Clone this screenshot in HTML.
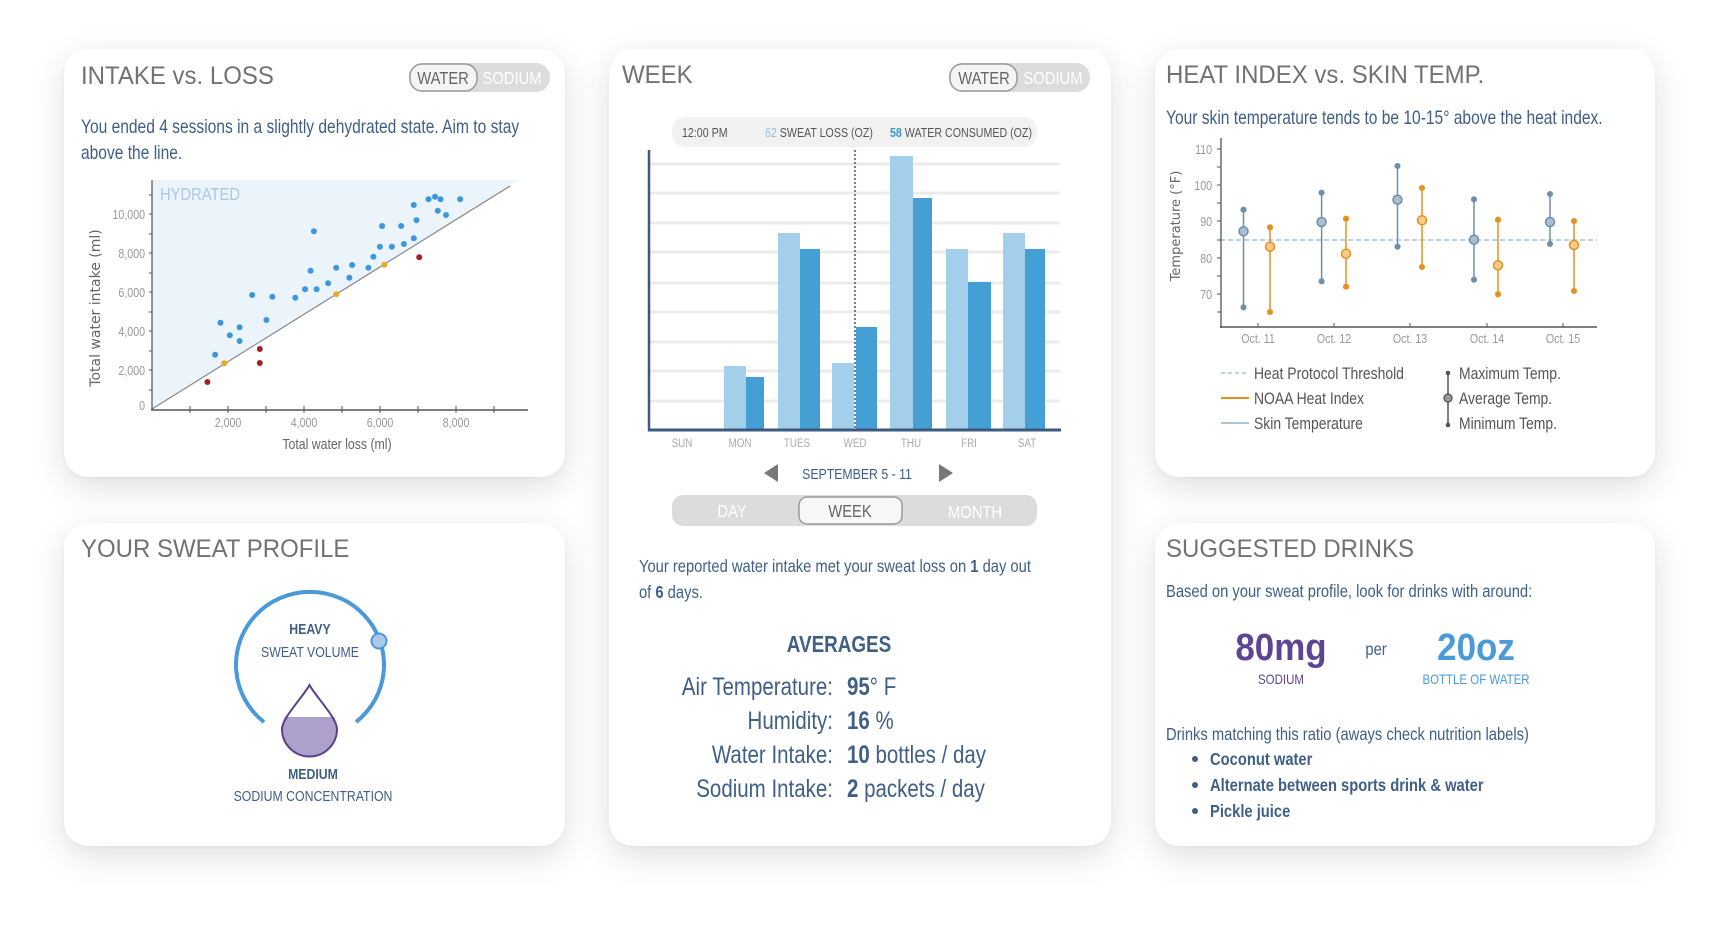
<!DOCTYPE html>
<html><head><meta charset="utf-8">
<style>
html,body{margin:0;padding:0;background:#fff;width:1712px;height:926px;overflow:hidden;}
.card{position:absolute;background:#fff;border-radius:24px;box-shadow:0 10px 34px rgba(0,0,0,0.13),0 1px 4px rgba(0,0,0,0.04);}
svg{position:absolute;left:0;top:0;}
text{font-family:"Liberation Sans Narrow","Liberation Sans",sans-serif;}
text:not(.r){transform-box:fill-box;transform-origin:0% 50%;transform:scaleX(0.82);}
text[text-anchor="middle"]:not(.r){transform-origin:50% 50%;}
text[text-anchor="end"]:not(.r){transform-origin:100% 50%;}
text.t{transform:scaleX(0.96);}
text.big{transform:scaleX(0.92);}
</style></head><body>
<div class="card" style="left:64px;top:49px;width:501px;height:428px"></div>
<div class="card" style="left:609px;top:49px;width:502px;height:797px"></div>
<div class="card" style="left:1155px;top:49px;width:500px;height:428px"></div>
<div class="card" style="left:64px;top:523px;width:501px;height:323px"></div>
<div class="card" style="left:1155px;top:523px;width:500px;height:323px"></div>

<svg width="1712" height="926" viewBox="0 0 1712 926">
<!-- ===== Card 1 ===== -->
<text class="t" x="81" y="84" font-size="25" fill="#727272">INTAKE vs. LOSS</text>
<rect x="409" y="63" width="141" height="29" rx="14" fill="#dcdcdc"/>
<rect x="410" y="64" width="67" height="27" rx="12" fill="#f4f4f4" stroke="#9a9a9a" stroke-width="1.5"/>
<text x="443" y="84" font-size="18" fill="#666" text-anchor="middle">WATER</text>
<text x="512" y="84" font-size="18" fill="#fff" text-anchor="middle">SODIUM</text>
<text font-size="19" fill="#3f5f86"><tspan x="81" y="133">You ended 4 sessions in a slightly dehydrated state. Aim to stay</tspan><tspan x="81" y="159">above the line.</tspan></text>

<polygon points="152,180 518,180 152,409" fill="#ecf4fb"/>
<text x="160" y="200" font-size="18" fill="#a9c6e4">HYDRATED</text>
<line x1="152" y1="409" x2="510" y2="186" stroke="#888" stroke-width="1.2"/>
<line x1="152" y1="180" x2="152" y2="410" stroke="#555" stroke-width="1.2"/>
<line x1="151" y1="410" x2="528" y2="410" stroke="#555" stroke-width="1.5"/>
<g stroke="#555" stroke-width="1">
<line x1="190" y1="406" x2="190" y2="413"/><line x1="228" y1="406" x2="228" y2="413"/><line x1="266" y1="406" x2="266" y2="413"/><line x1="304" y1="406" x2="304" y2="413"/><line x1="342" y1="406" x2="342" y2="413"/><line x1="380" y1="406" x2="380" y2="413"/><line x1="418" y1="406" x2="418" y2="413"/><line x1="456" y1="406" x2="456" y2="413"/><line x1="494" y1="406" x2="494" y2="413"/>
<line x1="149" y1="390" x2="152" y2="390"/><line x1="149" y1="370" x2="152" y2="370"/><line x1="149" y1="351" x2="152" y2="351"/><line x1="149" y1="331" x2="152" y2="331"/><line x1="149" y1="312" x2="152" y2="312"/><line x1="149" y1="292" x2="152" y2="292"/><line x1="149" y1="273" x2="152" y2="273"/><line x1="149" y1="253" x2="152" y2="253"/><line x1="149" y1="234" x2="152" y2="234"/><line x1="149" y1="214" x2="152" y2="214"/><line x1="149" y1="195" x2="152" y2="195"/>
</g>
<g font-size="13" fill="#999" text-anchor="end">
<text x="145" y="410" text-anchor="end">0</text><text x="145" y="375" text-anchor="end">2,000</text><text x="145" y="336" text-anchor="end">4,000</text><text x="145" y="297" text-anchor="end">6,000</text><text x="145" y="258" text-anchor="end">8,000</text><text x="145" y="219" text-anchor="end">10,000</text>
</g>
<g font-size="13" fill="#999">
<text x="228" y="427" text-anchor="middle">2,000</text><text x="304" y="427" text-anchor="middle">4,000</text><text x="380" y="427" text-anchor="middle">6,000</text><text x="456" y="427" text-anchor="middle">8,000</text>
</g>
<text x="337" y="449" font-size="15" fill="#666" text-anchor="middle">Total water loss (ml)</text>
<text class="r" transform="translate(100,308) rotate(-90)" font-size="14" fill="#666" text-anchor="middle" style="font-family:'DejaVu Sans',sans-serif">Total water intake (ml)</text>
<g fill="#3d97dc">
<circle cx="220.5" cy="322.7" r="3"/><circle cx="215.1" cy="354.7" r="3"/><circle cx="229.8" cy="335.3" r="3"/><circle cx="239.6" cy="327.3" r="3"/><circle cx="239.6" cy="341" r="3"/><circle cx="252.2" cy="295" r="3"/><circle cx="266.4" cy="320" r="3"/><circle cx="272.4" cy="296.7" r="3"/><circle cx="295.3" cy="297.7" r="3"/><circle cx="305.1" cy="289.3" r="3"/><circle cx="310.6" cy="270.7" r="3"/><circle cx="313.9" cy="231.3" r="3"/><circle cx="316.6" cy="289.3" r="3"/><circle cx="328.1" cy="283.3" r="3"/><circle cx="336.2" cy="267.7" r="3"/><circle cx="349.3" cy="277.7" r="3"/><circle cx="352.1" cy="265" r="3"/><circle cx="368.4" cy="267.7" r="3"/><circle cx="373.4" cy="256.7" r="3"/><circle cx="379.9" cy="246.7" r="3"/><circle cx="382.1" cy="226" r="3"/><circle cx="391.9" cy="246.7" r="3"/><circle cx="401.2" cy="226" r="3"/><circle cx="403.9" cy="244" r="3"/><circle cx="413.8" cy="238.3" r="3"/><circle cx="413.8" cy="205" r="3"/><circle cx="416.5" cy="220.3" r="3"/><circle cx="428.5" cy="199.3" r="3"/><circle cx="435" cy="196.7" r="3"/><circle cx="440.5" cy="199.3" r="3"/><circle cx="437.8" cy="210.7" r="3"/><circle cx="446" cy="215" r="3"/><circle cx="460.2" cy="199.3" r="3"/>
</g>
<g fill="#e8a82a"><circle cx="224.3" cy="363.3" r="3"/><circle cx="336.2" cy="294.3" r="3"/><circle cx="384.3" cy="264.7" r="3"/></g>
<g fill="#a82020"><circle cx="207.4" cy="382" r="3"/><circle cx="259.8" cy="349" r="3"/><circle cx="259.8" cy="363" r="3"/><circle cx="419.2" cy="257.3" r="3"/></g>

<!-- ===== Card 2 ===== -->
<text class="t" x="622" y="83" font-size="25" fill="#727272">WEEK</text>
<rect x="949" y="63" width="141" height="29" rx="14" fill="#dcdcdc"/>
<rect x="950" y="64" width="67" height="27" rx="12" fill="#f4f4f4" stroke="#9a9a9a" stroke-width="1.5"/>
<text x="984" y="84" font-size="18" fill="#666" text-anchor="middle">WATER</text>
<text x="1053" y="84" font-size="18" fill="#fff" text-anchor="middle">SODIUM</text>
<rect x="672" y="117" width="365" height="30" rx="13" fill="#f1f1f1"/>
<text x="682" y="137" font-size="13" fill="#555">12:00 PM</text>
<text x="765" y="137" font-size="13" fill="#555"><tspan fill="#8fc3e6">62</tspan> SWEAT LOSS (OZ)</text>
<text x="890" y="137" font-size="13" fill="#555"><tspan fill="#3d97d4" font-weight="bold">58</tspan> WATER CONSUMED (OZ)</text>
<g stroke="#ebebeb" stroke-width="3">
<line x1="650" y1="164" x2="1060" y2="164"/><line x1="650" y1="193" x2="1060" y2="193"/><line x1="650" y1="223" x2="1060" y2="223"/><line x1="650" y1="252" x2="1060" y2="252"/><line x1="650" y1="283" x2="1060" y2="283"/><line x1="650" y1="312" x2="1060" y2="312"/><line x1="650" y1="342" x2="1060" y2="342"/><line x1="650" y1="371" x2="1060" y2="371"/><line x1="650" y1="401" x2="1060" y2="401"/>
</g>
<g fill="#a3cfeb">
<rect x="724" y="366" width="22" height="64"/><rect x="778" y="233" width="22" height="197"/><rect x="832" y="363" width="22" height="67"/><rect x="890" y="156" width="23" height="274"/><rect x="946" y="249" width="22" height="181"/><rect x="1003" y="233" width="22" height="197"/>
</g>
<g fill="#449fd4">
<rect x="746" y="377" width="18" height="53"/><rect x="800" y="249" width="20" height="181"/><rect x="856" y="327" width="21" height="103"/><rect x="913" y="198" width="19" height="232"/><rect x="968" y="282" width="23" height="148"/><rect x="1025" y="249" width="20" height="181"/>
</g>
<line x1="855" y1="150" x2="855" y2="430" stroke="#3c5a80" stroke-width="1.5" stroke-dasharray="2,2"/>
<line x1="649" y1="150" x2="649" y2="431" stroke="#3c5a80" stroke-width="2.5"/>
<line x1="648" y1="430" x2="1061" y2="430" stroke="#3c5a80" stroke-width="3"/>
<g font-size="12" fill="#aaa">
<text x="682" y="447" text-anchor="middle">SUN</text><text x="740" y="447" text-anchor="middle">MON</text><text x="797" y="447" text-anchor="middle">TUES</text><text x="855" y="447" text-anchor="middle">WED</text><text x="911" y="447" text-anchor="middle">THU</text><text x="969" y="447" text-anchor="middle">FRI</text><text x="1027" y="447" text-anchor="middle">SAT</text>
</g>
<polygon points="764,473 778,464 778,482" fill="#777"/>
<text x="857" y="479" font-size="15" fill="#3f5f86" text-anchor="middle">SEPTEMBER 5 - 11</text>
<polygon points="953,473 939,464 939,482" fill="#777"/>
<rect x="672" y="495" width="365" height="31" rx="11" fill="#dcdcdc"/>
<rect x="799" y="497" width="103" height="27" rx="8" fill="#f7f7f7" stroke="#9a9a9a" stroke-width="1.5"/>
<text x="732" y="517" font-size="18" fill="#fff" text-anchor="middle">DAY</text>
<text x="850" y="517" font-size="18" fill="#666" text-anchor="middle">WEEK</text>
<text x="975" y="518" font-size="18" fill="#fff" text-anchor="middle">MONTH</text>
<text font-size="18" fill="#3f5f86"><tspan x="639" y="572">Your reported water intake met your sweat loss on <tspan font-weight="bold">1</tspan> day out</tspan><tspan x="639" y="598">of <tspan font-weight="bold">6</tspan> days.</tspan></text>
<text x="839" y="652" font-size="23" fill="#3f5f86" text-anchor="middle" font-weight="bold">AVERAGES</text>
<g font-size="25" fill="#3f5f86">
<text x="833" y="695" text-anchor="end">Air Temperature:</text><text x="847" y="695"><tspan font-weight="bold">95</tspan>° F</text>
<text x="833" y="729" text-anchor="end">Humidity:</text><text x="847" y="729"><tspan font-weight="bold">16</tspan> %</text>
<text x="833" y="763" text-anchor="end">Water Intake:</text><text x="847" y="763"><tspan font-weight="bold">10</tspan> bottles / day</text>
<text x="833" y="797" text-anchor="end">Sodium Intake:</text><text x="847" y="797"><tspan font-weight="bold">2</tspan> packets / day</text>
</g>

<!-- ===== Card 3 ===== -->
<text class="t" x="1166" y="83" font-size="25" fill="#727272">HEAT INDEX vs. SKIN TEMP.</text>
<text x="1166" y="124" font-size="19" fill="#3f5f86">Your skin temperature tends to be 10-15° above the heat index.</text>
<line x1="1220" y1="240" x2="1597" y2="240" stroke="#a9c4dd" stroke-width="1.5" stroke-dasharray="5,3"/>
<line x1="1221" y1="138" x2="1221" y2="328" stroke="#555" stroke-width="1.3"/>
<line x1="1220" y1="327" x2="1597" y2="327" stroke="#555" stroke-width="1.5"/>
<g stroke="#555" stroke-width="1">
<line x1="1217" y1="149" x2="1221" y2="149"/><line x1="1217" y1="167" x2="1221" y2="167"/><line x1="1217" y1="185" x2="1221" y2="185"/><line x1="1217" y1="203" x2="1221" y2="203"/><line x1="1217" y1="221" x2="1221" y2="221"/><line x1="1217" y1="240" x2="1221" y2="240"/><line x1="1217" y1="258" x2="1221" y2="258"/><line x1="1217" y1="276" x2="1221" y2="276"/><line x1="1217" y1="294" x2="1221" y2="294"/><line x1="1217" y1="312" x2="1221" y2="312"/>
<line x1="1258" y1="323" x2="1258" y2="327"/><line x1="1334" y1="323" x2="1334" y2="327"/><line x1="1410" y1="323" x2="1410" y2="327"/><line x1="1487" y1="323" x2="1487" y2="327"/><line x1="1563" y1="323" x2="1563" y2="327"/>
</g>
<g font-size="13" fill="#999">
<text x="1212" y="154" text-anchor="end">110</text><text x="1212" y="190" text-anchor="end">100</text><text x="1212" y="226" text-anchor="end">90</text><text x="1212" y="263" text-anchor="end">80</text><text x="1212" y="299" text-anchor="end">70</text>
</g>
<text class="r" transform="translate(1180,226) rotate(-90)" font-size="13" fill="#666" text-anchor="middle" style="font-family:'DejaVu Sans',sans-serif">Temperature (°F)</text>
<g font-size="13" fill="#999">
<text x="1258" y="343" text-anchor="middle">Oct. 11</text><text x="1334" y="343" text-anchor="middle">Oct. 12</text><text x="1410" y="343" text-anchor="middle">Oct. 13</text><text x="1487" y="343" text-anchor="middle">Oct. 14</text><text x="1563" y="343" text-anchor="middle">Oct. 15</text>
</g>
<g stroke="#6d8faa" stroke-width="1.5" fill="#6d8faa">
<line x1="1243.5" y1="209.7" x2="1243.5" y2="307.3"/><circle cx="1243.5" cy="209.7" r="2.3"/><circle cx="1243.5" cy="307.3" r="2.3"/>
<line x1="1321.6" y1="192.7" x2="1321.6" y2="281.3"/><circle cx="1321.6" cy="192.7" r="2.3"/><circle cx="1321.6" cy="281.3" r="2.3"/>
<line x1="1397.5" y1="166" x2="1397.5" y2="246.7"/><circle cx="1397.5" cy="166" r="2.3"/><circle cx="1397.5" cy="246.7" r="2.3"/>
<line x1="1474" y1="199.3" x2="1474" y2="279.7"/><circle cx="1474" cy="199.3" r="2.3"/><circle cx="1474" cy="279.7" r="2.3"/>
<line x1="1550" y1="194" x2="1550" y2="244"/><circle cx="1550" cy="194" r="2.3"/><circle cx="1550" cy="244" r="2.3"/>
</g>
<g stroke="#6d8faa" stroke-width="1.5" fill="#a9bfd2">
<circle cx="1243.5" cy="231.3" r="4.5"/><circle cx="1321.6" cy="222" r="4.5"/><circle cx="1397.5" cy="199.7" r="4.5"/><circle cx="1474" cy="239.7" r="4.5"/><circle cx="1550" cy="222" r="4.5"/>
</g>
<g stroke="#e8901f" stroke-width="1.5" fill="#e8901f">
<line x1="1270" y1="227.3" x2="1270" y2="312"/><circle cx="1270" cy="227.3" r="2.3"/><circle cx="1270" cy="312" r="2.3"/>
<line x1="1346" y1="218.7" x2="1346" y2="286.7"/><circle cx="1346" cy="218.7" r="2.3"/><circle cx="1346" cy="286.7" r="2.3"/>
<line x1="1422" y1="188" x2="1422" y2="267"/><circle cx="1422" cy="188" r="2.3"/><circle cx="1422" cy="267" r="2.3"/>
<line x1="1498" y1="219.7" x2="1498" y2="294.3"/><circle cx="1498" cy="219.7" r="2.3"/><circle cx="1498" cy="294.3" r="2.3"/>
<line x1="1574" y1="221" x2="1574" y2="291"/><circle cx="1574" cy="221" r="2.3"/><circle cx="1574" cy="291" r="2.3"/>
</g>
<g stroke="#e8901f" stroke-width="1.5" fill="#f9cb8f">
<circle cx="1270" cy="246.7" r="4.5"/><circle cx="1346" cy="253.7" r="4.5"/><circle cx="1422" cy="220.3" r="4.5"/><circle cx="1498" cy="265.3" r="4.5"/><circle cx="1574" cy="245" r="4.5"/>
</g>
<line x1="1221" y1="373" x2="1249" y2="373" stroke="#a9c4dd" stroke-width="1.5" stroke-dasharray="4,3"/>
<line x1="1221" y1="398" x2="1249" y2="398" stroke="#e8901f" stroke-width="2"/>
<line x1="1221" y1="423" x2="1249" y2="423" stroke="#a9c4dd" stroke-width="2"/>
<g font-size="17" fill="#555">
<text x="1254" y="379">Heat Protocol Threshold</text><text x="1254" y="404">NOAA Heat Index</text><text x="1254" y="429">Skin Temperature</text>
<text x="1459" y="379">Maximum Temp.</text><text x="1459" y="404">Average Temp.</text><text x="1459" y="429">Minimum Temp.</text>
</g>
<line x1="1448" y1="373" x2="1448" y2="425" stroke="#555" stroke-width="1.5"/>
<circle cx="1448" cy="373" r="2.3" fill="#555"/><circle cx="1448" cy="425" r="2.3" fill="#555"/>
<circle cx="1448" cy="398" r="4" fill="#999" stroke="#555" stroke-width="1.3"/>

<!-- ===== Card 4 ===== -->
<text class="t" x="81" y="557" font-size="25" fill="#727272">YOUR SWEAT PROFILE</text>
<path d="M264,722 A74,73 0 1 1 356,722" fill="none" stroke="#4a9ad8" stroke-width="4"/>
<circle cx="379" cy="641" r="7.5" fill="#aac8ea" stroke="#4a9ad8" stroke-width="2"/>
<text x="310" y="634" font-size="15" fill="#3f5f86" text-anchor="middle" font-weight="bold">HEAVY</text>
<text x="310" y="657" font-size="15" fill="#3f5f86" text-anchor="middle">SWEAT VOLUME</text>
<path d="M284.6,717 L334.4,717 C336,722 337,726 337,729 A27.5,27.5 0 0 1 282,729 C282,726 283,722 284.6,717 Z" fill="#ada0cb"/>
<path d="M309.5,685 C303,697 282,718 282,729 A27.5,27.5 0 0 0 337,729 C337,718 316,697 309.5,685 Z" fill="none" stroke="#5a3f8c" stroke-width="2"/>
<text x="313" y="779" font-size="15" fill="#3f5f86" text-anchor="middle" font-weight="bold">MEDIUM</text>
<text x="313" y="801" font-size="15" fill="#3f5f86" text-anchor="middle">SODIUM CONCENTRATION</text>

<!-- ===== Card 5 ===== -->
<text class="t" x="1166" y="557" font-size="25" fill="#727272">SUGGESTED DRINKS</text>
<text x="1166" y="597" font-size="18" fill="#3f5f86">Based on your sweat profile, look for drinks with around:</text>
<text class="big" x="1281" y="660" font-size="38" fill="#5d4594" text-anchor="middle" font-weight="bold">80mg</text>
<text x="1376" y="655" font-size="18" fill="#3f5f86" text-anchor="middle">per</text>
<text class="big" x="1476" y="660" font-size="38" fill="#4a9ad8" text-anchor="middle" font-weight="bold">20oz</text>
<text x="1281" y="684" font-size="14" fill="#5d4594" text-anchor="middle">SODIUM</text>
<text x="1476" y="684" font-size="14" fill="#4a9ad8" text-anchor="middle">BOTTLE OF WATER</text>
<text x="1166" y="740" font-size="18" fill="#3f5f86">Drinks matching this ratio (aways check nutrition labels)</text>
<g fill="#3f5f86"><circle cx="1195" cy="759" r="3"/><circle cx="1195" cy="785" r="3"/><circle cx="1195" cy="811" r="3"/></g>
<g font-size="18" fill="#3f5f86" font-weight="bold">
<text x="1210" y="765">Coconut water</text><text x="1210" y="791">Alternate between sports drink &amp; water</text><text x="1210" y="817">Pickle juice</text>
</g>
</svg>
</body></html>
